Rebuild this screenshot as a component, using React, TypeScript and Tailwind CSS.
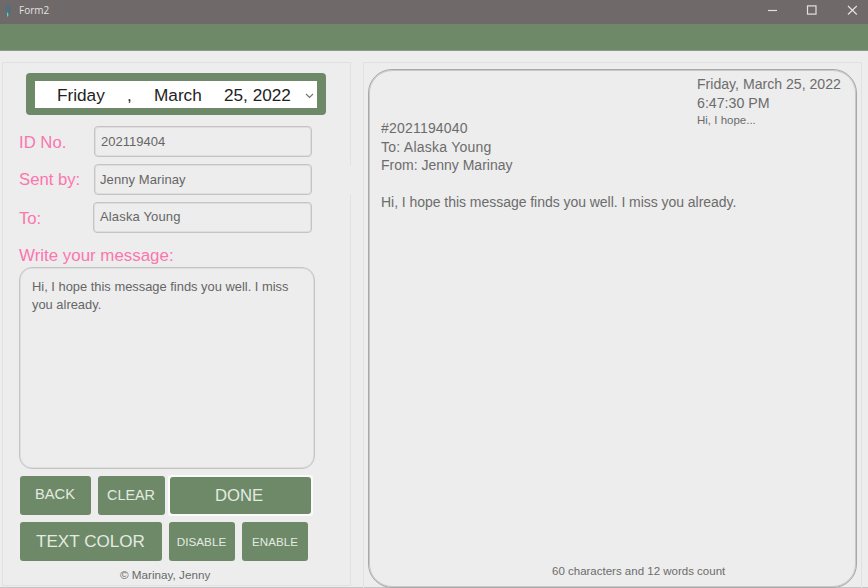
import type { ReactNode } from "react";

function Field({ label, value, className, labelClass }: { label: string; value: string; className: string; labelClass: string }) {
  return (
    <div className="flex">
      <div className={`shrink-0 w-[75px] text-[16.7px] leading-[20px] text-[#fb76ae] ${labelClass}`}>{label}</div>
      <div className={`rounded-[4px] border border-[#c4c4c4] shadow-[inset_0_0_0_1px_#dedede] text-[13px] text-[#666] ${className}`}>{value}</div>
    </div>
  );
}

function Button({ children, className }: { children: ReactNode; className: string }) {
  return (
    <button className={`flex items-center justify-center rounded-[3px] bg-[#6d8968] text-[#e3ebe1] whitespace-nowrap ${className}`}>
      {children}
    </button>
  );
}

function TitleBar() {
  return (
    <header className="flex h-6 shrink-0 items-center bg-[#6f6a69] text-[#e2e0e0]">
      <svg width="18" height="24" viewBox="0 0 18 24" className="shrink-0">
        <path d="M6 4h4l1 5-1 7H6L5 10z" fill="#5a6c73" />
        <path d="M7 5h3v2H7zM6 9l2 2v3H6z" fill="#4a7688" />
        <path d="M7 12l1.500 2L8 17l-1-1z" fill="#70d3ad" />
      </svg>
      <span className="ml-[1px] mt-[-3px] font-['Open_Sans',sans-serif] text-[10px]">Form2</span>
      <svg width="100" height="24" viewBox="0 0 100 24" className="ml-auto" fill="none" stroke="#e2e0e0" strokeWidth="1.200">
        <path d="M0 10.500h9" />
        <rect x="39.500" y="5.900" width="8.500" height="8.200" />
        <path d="M80 6l8.800 8.500M88.800 6L80 14.500" />
      </svg>
    </header>
  );
}

export default function App() {
  return (
    <div className="flex h-[588px] w-[868px] flex-col overflow-hidden bg-[#ededed] font-['Liberation_Sans',Arial,sans-serif]">
      <TitleBar />
      <div className="h-[27px] shrink-0 border-b border-[#8b9b88] bg-[#6d8968]" />
      <main className="flex h-[537px] gap-[12px] border-b border-[#c4c4c4] pl-[2px] pt-[11px]">
        <section className="relative h-[524px] w-[349px] shrink-0 border border-[#e1e1e1] pl-[16px] pt-[10px]">
          <div className="absolute -right-px top-[102px] h-[30px] w-[2px] bg-[#ededed]" />
          <div className="ml-[7px] flex h-[42px] w-[300px] rounded-[4px] bg-[#6d8968] px-[9px] pb-[7px] pt-[8px]">
            <div className="flex w-full items-center bg-white pl-[22px] pt-[2px] text-[17.200px] leading-[25px] text-[#222]">
              <span className="w-[70px]">Friday</span>
              <span className="w-[27px]">,</span>
              <span className="w-[70px]">March</span>
              <span className="w-[80px]">25, 2022</span>
              <svg width="10" height="8" viewBox="0 0 10 8" fill="none" stroke="#777" strokeWidth="1.200">
                <path d="M2 2l3.500 3.500L9 2" />
              </svg>
            </div>
          </div>

          <div className="mt-[11px] flex flex-col gap-[7px]">
            <Field label="ID No." value="202119404" labelClass="pt-[7px]" className="h-[31px] w-[218px] pl-[6px] text-[12.700px] leading-[29px]" />
            <Field label="Sent by:" value="Jenny Marinay" labelClass="pt-[6px]" className="h-[31px] w-[218px] pl-[5px] leading-[30px] tracking-[0.080px]" />
            <Field label="To:" value="Alaska Young" labelClass="pt-[7px]" className="-ml-px h-[31px] w-[219px] pl-[6px] leading-[28px] tracking-[0.150px]" />
          </div>

          <div className="mt-[12px] h-[22px] pt-px text-[16.900px] leading-[20px] text-[#fb76ae]">Write your message:</div>
          <div className="h-[202px] w-[296px] rounded-[13px] border border-[#c4c4c4] shadow-[inset_0_0_0_1px_#dedede] pl-[12px] pt-[10px] text-[12.900px] leading-[18px] text-[#666]">
            Hi, I hope this message finds you well. I miss
            <br />
            you already.
          </div>

          <div className="ml-px mt-[6px] flex gap-[6px]">
            <Button className="my-[1px] h-[39px] w-[71px] pb-[2px] pr-px text-[14.700px]">BACK</Button>
            <Button className="my-[1px] ml-px h-[39px] w-[67px] pr-px text-[14.400px]">CLEAR</Button>
            <div className="-ml-[3px] rounded-[3px] bg-[#f9faf9] p-[2px]">
              <Button className="h-[37px] w-[141px] pr-[3px] text-[16.700px]">DONE</Button>
            </div>
          </div>
          <div className="ml-px mt-[6px] flex">
            <Button className="h-[39px] w-[142px] pr-px text-[17.100px]">TEXT COLOR</Button>
            <Button className="ml-[7px] h-[39px] w-[66px] pr-px text-[11.700px]">DISABLE</Button>
            <Button className="ml-[7px] h-[39px] w-[66px] text-[11.600px]">ENABLE</Button>
          </div>
          <div className="ml-[101px] mt-[7px] text-[11.700px] leading-[14px] text-[#6a6a6a]">© Marinay, Jenny</div>
        </section>

        <section className="h-[526px] w-[499px] shrink-0 border border-b-0 border-[#e1e1e1] pl-[4px] pt-[6px] text-[#6c6c6c]">
          <div className="flex h-[519px] w-[489px] flex-col rounded-[24px] border border-[#a8a8a8] shadow-[inset_0_0_0_1px_#c9c9c9]">
            <div className="ml-[328px] mt-[5px] text-[14.600px] leading-[18.500px]">
              <div className="whitespace-nowrap text-[14.100px]">Friday, March 25, 2022</div>
              <div className="text-[14.200px]">6:47:30 PM</div>
              <div className="text-[11.500px] leading-[16px]">Hi, I hope...</div>
            </div>
            <div className="ml-[12px] mt-[-9px] text-[14px] leading-[18.500px]">
              <div className="tracking-[0.200px]">#2021194040</div>
              <div className="tracking-[0.250px]">To: Alaska Young</div>
              <div>From: Jenny Marinay</div>
              <div className="mt-[18.500px] tracking-[-0.040px]">Hi, I hope this message finds you well. I miss you already.</div>
            </div>
            <div className="mb-[8px] ml-[183px] mt-auto text-[11.500px] leading-[16px]">60 characters and 12 words count</div>
          </div>
        </section>
      </main>
    </div>
  );
}
